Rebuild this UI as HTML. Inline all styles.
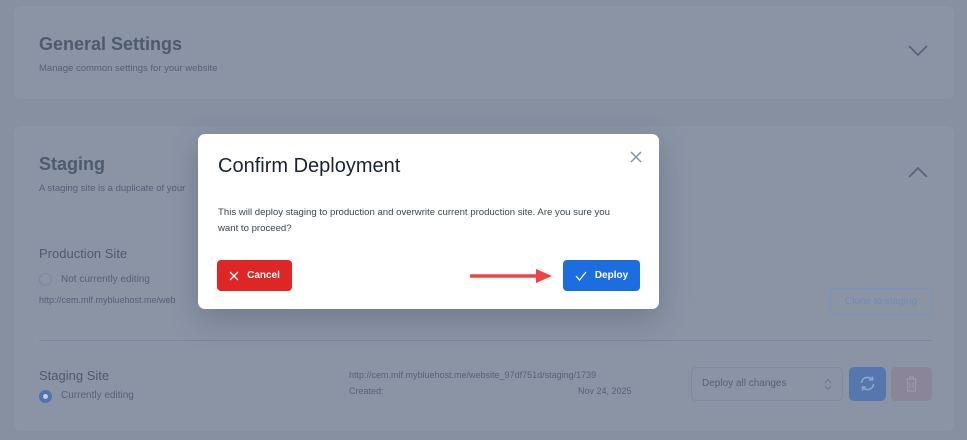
<!DOCTYPE html>
<html><head><meta charset="utf-8"><style>
*{box-sizing:border-box;margin:0;padding:0}
body{width:967px;height:440px;overflow:hidden;background:#8690a1;font-family:"Liberation Sans",sans-serif;position:relative}
.card{position:absolute;left:13px;width:942px;background:#8a94a5;border-radius:8px;border:1px solid #848fa0}
.t{position:absolute;color:#4e5a6e}
.s{position:absolute;color:#56627a;font-size:10px}
.modal{position:absolute;left:198px;top:134px;width:461px;height:175px;background:#fff;border-radius:7px;box-shadow:0 10px 30px rgba(40,50,70,.25)}
.btn{position:absolute;height:31px;border-radius:4px;color:#fff;font-size:10px;font-weight:bold;display:flex;align-items:center;justify-content:center;gap:8px}
</style></head><body>
<div class="card" style="top:5px;height:95px"></div>
<div class="t" style="left:39px;top:34px;font-size:18px;font-weight:bold">General Settings</div>
<div class="s" style="left:39px;top:63px;font-size:9.5px">Manage common settings for your website</div>
<svg style="position:absolute;left:908px;top:45px" width="20" height="12"><path d="M1 1 L10 10 L19 1" fill="none" stroke="#56627a" stroke-width="1.6"/></svg>

<div class="card" style="top:125px;height:307px"></div>
<div class="t" style="left:39px;top:154px;font-size:18px;font-weight:bold">Staging</div>
<div class="s" style="left:39px;top:183px;font-size:9.5px">A staging site is a duplicate of your</div>
<svg style="position:absolute;left:908px;top:166px" width="20" height="12"><path d="M1 11 L10 2 L19 11" fill="none" stroke="#56627a" stroke-width="1.6"/></svg>
<div class="t" style="left:39px;top:246px;font-size:13px">Production Site</div>
<div style="position:absolute;left:39px;top:273px;width:13px;height:13px;border-radius:50%;border:1px solid #7d889a"></div>
<div class="s" style="left:61px;top:274px">Not currently editing</div>
<div class="s" style="left:39px;top:295px;font-size:9px">http://cem.mlf.mybluehost.me/web</div>
<div style="position:absolute;left:830px;top:288px;width:102px;height:27px;border:1px solid #7a92c0;border-radius:4px;color:#7489b3;font-size:10px;display:flex;align-items:center;justify-content:center">Clone to staging</div>
<div style="position:absolute;left:39px;top:340px;width:893px;height:1px;background:#7d889b"></div>
<div class="t" style="left:39px;top:368px;font-size:13px">Staging Site</div>
<div style="position:absolute;left:39px;top:390px;width:13px;height:13px;border-radius:50%;border:4px solid #4f73b3;background:#c6ccd6"></div>
<div class="s" style="left:61px;top:390px">Currently editing</div>
<div class="s" style="left:349px;top:370px;font-size:9px">http://cem.mlf.mybluehost.me/website_97df751d/staging/1739</div>
<div class="s" style="left:349px;top:386px;font-size:9px">Created:</div>
<div class="s" style="left:578px;top:386px;font-size:9px">Nov 24, 2025</div>
<div style="position:absolute;left:691px;top:367px;width:152px;height:34px;border:1px solid #7f8a9c;border-radius:5px;color:#56627a;font-size:10px;padding:10px 10px">Deploy all changes<svg style="position:absolute;right:10px;top:10px" width="8" height="13"><path d="M1 5L4 1.5L7 5M1 8L4 11.5L7 8" fill="none" stroke="#6c788c" stroke-width="1"/></svg></div>
<div style="position:absolute;left:849px;top:367px;width:37px;height:34px;background:#5577ad;border-radius:5px"><svg style="position:absolute;left:10px;top:8px" width="17" height="17"><path d="M2.5 8A6 6 0 0 1 13 4.5M14.5 9A6 6 0 0 1 4 12.5" fill="none" stroke="#8fa6cc" stroke-width="1.6"/><path d="M13.5 1.5V5H10M3.5 15.5V12H7" fill="none" stroke="#8fa6cc" stroke-width="1.6"/></svg></div>
<div style="position:absolute;left:891px;top:367px;width:41px;height:34px;background:#8a8598;border-radius:5px"><svg style="position:absolute;left:14px;top:9px" width="13" height="16"><path d="M1 3H12M4.5 3V1H8.5V3M2.5 3V15H10.5V3M5 6V12M8 6V12" fill="none" stroke="#9c97aa" stroke-width="1.2"/></svg></div>

<div class="modal">
<div style="position:absolute;left:20px;top:21px;font-size:20px;color:#1a2236">Confirm Deployment</div>
<svg style="position:absolute;left:432px;top:17px" width="12" height="12"><path d="M1 1L11 11M11 1L1 11" stroke="#8a94a6" stroke-width="1.5"/></svg>
<div style="position:absolute;left:20px;top:71px;width:405px;font-size:9.6px;line-height:16px;color:#3c4558">This will deploy staging to production and overwrite current production site. Are you sure you want to proceed?</div>
<div class="btn" style="left:19px;top:126px;width:75px;background:#de2626"><svg width="10" height="10"><path d="M1 1L9 9M9 1L1 9" stroke="#fff" stroke-width="1.3"/></svg>Cancel</div>
<svg style="position:absolute;left:270px;top:133px" width="85" height="18"><path d="M2 9H70" stroke="#ef4444" stroke-width="3.5"/><path d="M68 2L84 9L68 16Z" fill="#ef4444"/></svg>
<div class="btn" style="left:365px;top:126px;width:77px;background:#1c6de0"><svg width="12" height="10"><path d="M1 5L4.5 9L11 1" fill="none" stroke="#fff" stroke-width="1.3"/></svg>Deploy</div>
</div>
</body></html>
